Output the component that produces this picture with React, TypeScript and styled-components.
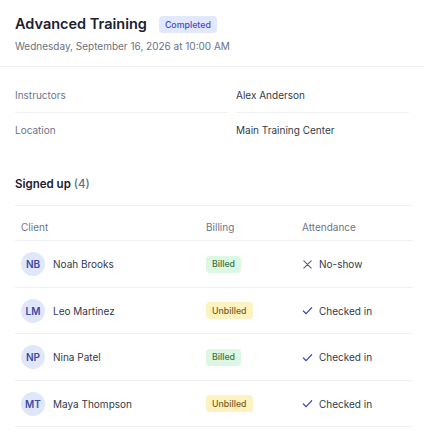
import styled, { createGlobalStyle } from 'styled-components';

const GlobalStyle = createGlobalStyle`
  body {
    margin: 0;
    background: #ffffff;
    font-family: Inter, "Noto Sans", sans-serif;
  }
`;

const Page = styled.div`
  width: 424px;
  color: #333a47;
`;

const Header = styled.header`
  padding: 12px 15px 12px;
  border-bottom: 1px solid #eef0f3;
`;

const TitleRow = styled.div`
  display: flex;
  align-items: center;
  gap: 12px;
`;

const Title = styled.h1`
  margin: 0;
  font-size: 14.5px;
  line-height: 24px;
  font-weight: 600;
  color: #1c2130;
`;

const Badge = styled.span<{ tone: 'blue' | 'green' | 'yellow' }>`
  display: inline-flex;
  align-items: center;
  height: 17px;
  padding: 0 6px;
  border-radius: 4px;
  font-size: 8.8px;
  font-weight: 500;
  background: ${({ tone }) =>
    tone === 'blue' ? '#e2e8fd' : tone === 'green' ? '#dcf7e3' : '#fdf2c2'};
  color: ${({ tone }) =>
    tone === 'blue' ? '#3f4fc0' : tone === 'green' ? '#3a7647' : '#7a5e1c'};
`;

const DateLine = styled.div`
  margin-top: 2px;
  font-size: 10px;
  line-height: 16px;
  color: #6b7280;
`;

const Details = styled.dl`
  margin: 0;
  padding: 11px 15px 0;
  display: grid;
  grid-template-columns: 213px 1fr;
  column-gap: 8px;
`;

const Term = styled.dt<{ last?: boolean }>`
  padding: 9px 0;
  font-size: 10px;
  line-height: 16px;
  color: #6e7585;
  border-bottom: ${({ last }) => (last ? 'none' : '1px solid #f1f2f5')};
`;

const Value = styled.dd<{ last?: boolean }>`
  margin: 0;
  padding: 9px 0;
  font-size: 10px;
  line-height: 16px;
  color: #333a47;
  border-bottom: ${({ last }) => (last ? 'none' : '1px solid #f1f2f5')};
`;

const Section = styled.section`
  padding: 27px 15px 0;
`;

const SectionTitle = styled.h2`
  margin: 0 0 11px;
  font-size: 11.5px;
  line-height: 20px;
  font-weight: 600;
  color: #1c2130;

  span {
    font-weight: 500;
    color: #676f80;
  }
`;

const Table = styled.table`
  width: 398px;
  border-collapse: collapse;
  border-top: 1px solid #eef0f3;
  table-layout: fixed;
`;

const HeadCell = styled.th<{ w: number }>`
  width: ${({ w }) => w}px;
  padding: 13px 6px 5px;
  text-align: left;
  font-size: 10px;
  line-height: 16px;
  font-weight: 400;
  color: #6e7585;
  border-bottom: 1px solid #eef0f3;
`;

const Cell = styled.td`
  padding: 11px 6px 10.5px;
  height: 24px;
  font-size: 10px;
  line-height: 16px;
  color: #333a47;
  border-bottom: 1px solid #eef0f3;
`;

const ClientBox = styled.div`
  display: flex;
  align-items: center;
  gap: 8px;
`;

const Avatar = styled.span`
  width: 24px;
  height: 24px;
  border-radius: 50%;
  background: #e0e7fb;
  color: #3a4ca3;
  font-size: 10px;
  font-weight: 600;
  display: inline-flex;
  align-items: center;
  justify-content: center;
`;

const Attendance = styled.div`
  display: flex;
  align-items: center;
  gap: 6px;
`;

const IconWrap = styled.span<{ color: string }>`
  display: inline-flex;
  width: 11px;
  height: 11px;
  color: ${({ color }) => color};
`;

type Row = {
  initials: string;
  name: string;
  billed: boolean;
  attended: boolean;
};

const rows: Row[] = [
  { initials: 'NB', name: 'Noah Brooks', billed: true, attended: false },
  { initials: 'LM', name: 'Leo Martinez', billed: false, attended: true },
  { initials: 'NP', name: 'Nina Patel', billed: true, attended: true },
  { initials: 'MT', name: 'Maya Thompson', billed: false, attended: true },
];

function CrossIcon() {
  return (
    <svg width="11" height="11" viewBox="0 0 12 12" fill="none">
      <path d="M2 2l8 8M10 2l-8 8" stroke="currentColor" strokeWidth="1.2" strokeLinecap="round" />
    </svg>
  );
}

function CheckIcon() {
  return (
    <svg width="11" height="11" viewBox="0 0 12 12" fill="none">
      <path d="M1.5 6.5l3 3 6-6.5" stroke="currentColor" strokeWidth="1.3" strokeLinecap="round" strokeLinejoin="round" />
    </svg>
  );
}

export default function App() {
  return (
    <Page>
      <GlobalStyle />
      <Header>
        <TitleRow>
          <Title>Advanced Training</Title>
          <Badge tone="blue">Completed</Badge>
        </TitleRow>
        <DateLine>Wednesday, September 16, 2026 at 10:00 AM</DateLine>
      </Header>

      <Details>
        <Term>Instructors</Term>
        <Value>Alex Anderson</Value>
        <Term last>Location</Term>
        <Value last>Main Training Center</Value>
      </Details>

      <Section>
        <SectionTitle>
          Signed up <span>(4)</span>
        </SectionTitle>
        <Table>
          <thead>
            <tr>
              <HeadCell w={173}>Client</HeadCell>
              <HeadCell w={84}>Billing</HeadCell>
              <HeadCell w={105}>Attendance</HeadCell>
            </tr>
          </thead>
          <tbody>
            {rows.map((r) => (
              <tr key={r.initials}>
                <Cell>
                  <ClientBox>
                    <Avatar>{r.initials}</Avatar>
                    {r.name}
                  </ClientBox>
                </Cell>
                <Cell>
                  <Badge tone={r.billed ? 'green' : 'yellow'}>
                    {r.billed ? 'Billed' : 'Unbilled'}
                  </Badge>
                </Cell>
                <Cell>
                  <Attendance>
                    <IconWrap color={r.attended ? '#3a4db4' : '#586070'}>
                      {r.attended ? <CheckIcon /> : <CrossIcon />}
                    </IconWrap>
                    {r.attended ? 'Checked in' : 'No-show'}
                  </Attendance>
                </Cell>
              </tr>
            ))}
          </tbody>
        </Table>
      </Section>
    </Page>
  );
}
